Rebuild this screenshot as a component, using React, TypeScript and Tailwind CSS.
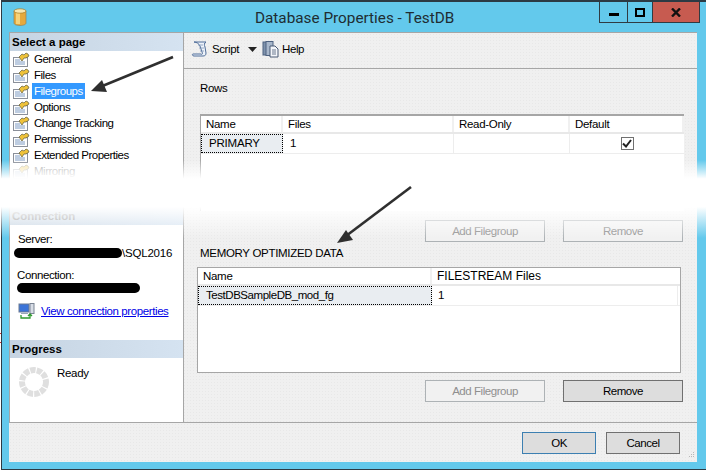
import React from "react";

const font = { fontFamily: '"Liberation Sans", Arial, sans-serif' };

function PageIcon({ dim }: { dim?: boolean }) {
  return (
    <svg width="17" height="15" viewBox="0 0 17 15" className={dim ? "shrink-0 opacity-40" : "shrink-0"}>
      <rect x="0.5" y="5.500" width="14" height="9" fill="#fdfdfd" stroke="#8a8f99" />
      <path d="M2 8h5M2 10h10M2 12h10" stroke="#7f9cc4" strokeWidth="1" />
      <path d="M6 5l3-3 2 1 2-2 2 1 1 2-3 2-2 0-2 3z" fill="#efc23a" stroke="#5f5a3a" strokeWidth="0.7" />
    </svg>
  );
}

function NavItem({ label, active, dim }: { label: string; active?: boolean; dim?: boolean }) {
  return (
    <div className="flex h-4 items-center pl-[3px]">
      <PageIcon dim={dim} />
      <span
        className={
          "ml-[2px] flex h-4 items-center px-[2px] pt-[1px] text-[11.5px] tracking-[-0.5px] " +
          (active ? "bg-[#3399ff] text-white" : dim ? "text-[#a8a8a8]" : "text-black")
        }
      >
        {label}
      </span>
    </div>
  );
}

function SectionHead({ label, faded }: { label: string; faded?: boolean }) {
  return (
    <div
      className={
        "flex h-[18px] items-center bg-gradient-to-r from-[#c6d4e2] to-[#d5e3f1] pl-[2px] pt-[1px] text-[11.5px] font-bold " +
        (faded ? "text-[#888]" : "text-black")
      }
    >
      {label}
    </div>
  );
}

function Btn({ label, disabled, primary, w }: { label: string; disabled?: boolean; primary?: boolean; w: string }) {
  return (
    <div
      className={
        "flex h-[22px] items-center justify-center border pt-[1px] text-[11.5px] tracking-[-0.45px] " +
        w +
        " " +
        (disabled
          ? "border-[#adb2b5] bg-[#f1f1f1] text-[#8f8f8f]"
          : primary
            ? "border-[#3c7fb1] bg-[#dddddd] text-black"
            : "border-[#707070] bg-[#dddddd] text-black")
      }
    >
      {label}
    </div>
  );
}

function HeadCell({ label, w }: { label: string; w: string }) {
  return (
    <div className={"flex h-full items-center border-r-2 border-[#f0f0f0] pl-[5px] pt-[1px] text-[11.5px] tracking-[-0.3px] text-black " + w}>{label}</div>
  );
}

export default function App() {
  return (
    <div className="relative h-[471px] w-[706px] overflow-hidden bg-white pl-[1px] text-[11.5px] text-black" style={font}>
      <div className="flex h-[470px] flex-col border-b border-l border-t-2 border-b-[#2c3a44] border-l-[#2c3a44] border-t-[#2c3a44] bg-[#63c9ec]">
        {/* title bar */}
        <div className="relative flex h-[30px] shrink-0 items-start">
          <svg width="14" height="18" viewBox="0 0 14 18" className="ml-[11px] mt-[6px]">
            <path d="M1 3v12c0 1.500 2.500 2.500 6 2.500s6-1 6-2.500V3z" fill="#e5a93c" stroke="#9a8050" strokeWidth="0.7" />
            <rect x="3" y="4" width="4" height="12" fill="#f6d27a" />
            <ellipse cx="7" cy="3" rx="6" ry="2.200" fill="#f8e7b0" stroke="#a87a1f" strokeWidth="0.7" />
          </svg>
          <div className="ml-[228px] mt-[5px] text-[15.3px] leading-[22px] text-[#1f2d33]" style={{ fontFamily: "Roboto, sans-serif" }}>
            Database Properties - TestDB
          </div>
          <div className="ml-auto mr-[6px] flex h-[21px] border border-t-0 border-[#303b42]">
            <div className="flex w-[28px] items-center justify-center border-r border-[#303b42]">
              <div className="mt-[4px] h-[3px] w-[10px] bg-black" />
            </div>
            <div className="flex w-[25px] items-center justify-center border-r border-[#303b42]">
              <div className="h-[9px] w-[10px] border-2 border-black" />
            </div>
            <div className="flex w-[46px] items-center justify-center bg-[#c75b50]">
              <svg width="10" height="9" viewBox="0 0 10 9">
                <path d="M1 .5l8 8M9 .5l-8 8" stroke="#111" strokeWidth="2.4" />
              </svg>
            </div>
          </div>
        </div>

        {/* dialog */}
        <div className="ml-[7px] flex h-[430px] w-[688px] shrink-0 flex-col border-t border-t-[#a6a6a6] bg-[#f0f0f0] bg-[radial-gradient(#e8e8e8_0.6px,transparent_0.7px)] bg-[length:3px_3px]">
          <div className="flex h-[390px] shrink-0 border-b border-[#a6a6a6]">
            {/* sidebar */}
            <div className="flex w-[175px] shrink-0 flex-col border-x border-[#a6a6a6] bg-white">
              <div className="h-[174px] shrink-0">
                <SectionHead label="Select a page" />
                <div className="flex flex-col">
                  <NavItem label="General" />
                  <NavItem label="Files" />
                  <NavItem label="Filegroups" active />
                  <NavItem label="Options" />
                  <NavItem label="Change Tracking" />
                  <NavItem label="Permissions" />
                  <NavItem label="Extended Properties" />
                  <NavItem label="Mirroring" dim />
                </div>
              </div>
              <div className="h-[133px] shrink-0">
                <SectionHead label="Connection" faded />
                <div className="pl-[4px] pt-[7px] leading-[14px] tracking-[-0.4px]">
                  <div className="pl-[4px]">Server:</div>
                  <div className="flex items-center">
                    <span className="h-[10px] w-[108px] rounded-full bg-black" />
                    <span className="tracking-[-0.2px]">\SQL2016</span>
                  </div>
                  <div className="ml-[3px] mt-[8px]">Connection:</div>
                  <div className="ml-[3px] mt-[1px] h-[10px] w-[123px] rounded-full bg-black" />
                  <div className="ml-[4px] mt-[10px] flex items-center">
                    <svg width="17" height="16" viewBox="0 0 17 16">
                      <rect x="1" y="1" width="10" height="8" fill="#3b74d8" stroke="#6a7a94" />
                      <rect x="12" y="0.5" width="4" height="10" fill="#d8dde6" stroke="#7a8493" />
                      <path d="M3 10h7v1H3z" fill="#9aa7b8" />
                      <path d="M3 12v3h9v-3M10 13l2-2 2 2" fill="none" stroke="#2f9a2f" strokeWidth="1.3" />
                    </svg>
                    <span className="ml-[6px] whitespace-nowrap text-[#0000e6] underline">View connection properties</span>
                  </div>
                </div>
              </div>
              <div className="flex-1">
                <SectionHead label="Progress" />
                <div className="flex pl-[9px] pt-[9px]">
                  <svg width="30" height="30" viewBox="0 0 30 30">
                    <circle cx="15" cy="15" r="12" fill="none" stroke="#dfdfdf" strokeWidth="6" strokeDasharray="5.400 1.150" />
                  </svg>
                  <span className="ml-[8px] mt-[-2px] tracking-[-0.3px]">Ready</span>
                </div>
              </div>
            </div>

            {/* main */}
            <div className="flex min-w-0 flex-1 flex-col">
              <div className="flex h-[36px] shrink-0 items-center border-b border-[#a6a6a6] pb-[2px] pl-[7px]">
                <svg width="17" height="17" viewBox="0 0 17 17">
                  <path d="M3 1h12c-2 1-2 3-1 5l1 6c0 2-1 3-3 3H3c-2 0-2-2-1-2h8c1 1 2 0 1-2L9 5C8 3 6 1 3 1z" fill="#eef3fa" stroke="#4f6d99" strokeWidth="1" />
                  <path d="M7 4h5M8 7h5M9 10h4" stroke="#7f96b6" strokeWidth="0.8" />
                </svg>
                <span className="ml-[4px] w-[25px] tracking-[-0.4px]">Script</span>
                <svg width="9" height="5" viewBox="0 0 9 5" className="ml-[11px]">
                  <path d="M0 0h9L4.500 5z" fill="#222" />
                </svg>
                <svg width="17" height="17" viewBox="0 0 17 17" className="ml-[5px]">
                  <rect x="1" y="1" width="7" height="13" fill="#7f93ad" stroke="#4e6280" />
                  <rect x="4" y="0.500" width="7" height="14" fill="#a8b7cb" stroke="#4e6280" />
                  <path d="M8 5h5l3 3v8H8z" fill="#f4f6fa" stroke="#4a5a75" />
                  <path d="M10 9h4M10 11h4M10 13h4" stroke="#4a5a75" strokeWidth="0.8" />
                </svg>
                <span className="ml-[3px] tracking-[-0.4px]">Help</span>
              </div>

              <div className="pl-[16px] pt-[12px] leading-[15px] tracking-[-0.3px]">Rows</div>

              {/* table 1 */}
              <div className="ml-[16px] mt-[18px] h-[97px] w-[484px] border-l border-t-2 border-[#a6a6a6] bg-white">
                <div className="flex h-[18px] border-b-2 border-[#e8e8e8]">
                  <HeadCell label="Name" w="w-[82px]" />
                  <HeadCell label="Files" w="w-[171px]" />
                  <HeadCell label="Read-Only" w="w-[116px]" />
                  <HeadCell label="Default" w="w-[114px]" />
                </div>
                <div className="flex h-[20px] border-b border-[#ededed]">
                  <div className="flex w-[82px] items-center border border-dotted border-black bg-[#e9edf1] pl-[7px] tracking-[-0.2px]">PRIMARY</div>
                  <div className="flex w-[171px] items-center border-r border-[#ededed] pl-[7px]">1</div>
                  <div className="w-[116px] border-r border-[#ededed]" />
                  <div className="flex w-[114px] items-center justify-center">
                    <div className="flex h-[13px] w-[13px] items-center justify-center border border-[#707070] bg-white">
                      <svg width="10" height="9" viewBox="0 0 10 9">
                        <path d="M1 4.500l3 3 5-6.500" fill="none" stroke="#222" strokeWidth="2" />
                      </svg>
                    </div>
                  </div>
                </div>
              </div>

              <div className="mr-[14px] mt-[9px] flex justify-end gap-[18px]">
                <Btn label="Add Filegroup" disabled w="w-[120px]" />
                <Btn label="Remove" disabled w="w-[120px]" />
              </div>

              <div className="ml-[16px] mt-[4px] leading-[15px] tracking-[-0.3px]">MEMORY OPTIMIZED DATA</div>

              {/* table 2 */}
              <div className="ml-[13px] mt-[6px] h-[106px] w-[484px] border border-[#a6a6a6] bg-white">
                <div className="flex h-[18px] border-b-2 border-[#e8e8e8]">
                  <HeadCell label="Name" w="w-[234px]" />
                  <div className="flex items-center pl-[5px] text-[12px]">FILESTREAM Files</div>
                </div>
                <div className="flex h-[20px] border-b border-[#ededed]">
                  <div className="flex w-[234px] items-center border border-dotted border-black bg-[#e9edf1] pl-[7px] tracking-[-0.45px]">TestDBSampleDB_mod_fg</div>
                  <div className="flex w-[246px] items-center border-r border-[#ededed] pl-[6px]">1</div>
                </div>
              </div>

              <div className="mr-[14px] mt-[7px] flex justify-end gap-[18px]">
                <Btn label="Add Filegroup" disabled w="w-[120px]" />
                <Btn label="Remove" w="w-[120px]" />
              </div>
            </div>
          </div>

          {/* footer */}
          <div className="relative flex flex-1 items-start justify-end gap-[10px] pr-[17px] pt-[9px]">
            <Btn label="OK" primary w="w-[74px]" />
            <Btn label="Cancel" w="w-[74px]" />
            <svg width="8" height="8" viewBox="0 0 8 8" className="absolute bottom-[3px] right-[2px]">
              <path d="M6 1h1v1H6zM4 3h1v1H4zM6 3h1v1H6zM2 5h1v1H2zM4 5h1v1H4zM6 5h1v1H6z" fill="#b8b8b8" />
            </svg>
          </div>
        </div>
      </div>

      {/* torn-out white band over the screenshot */}
      <div className="pointer-events-none absolute left-0 top-[160px] h-[78px] w-full bg-[linear-gradient(to_bottom,rgba(255,255,255,0)_0%,rgba(255,255,255,1)_24%,rgba(255,255,255,1)_60%,rgba(255,255,255,0)_100%)]" />

      {/* arrows and the few stray pixels at the screenshot's edge */}
      <svg width="706" height="471" viewBox="0 0 706 471" className="pointer-events-none absolute left-0 top-0">
        <path d="M173 57L100 87" stroke="#2f2f2f" strokeWidth="2.600" fill="none" />
        <path d="M91 91l11-11 5 12z" fill="#2f2f2f" />
        <path d="M411 187L346 236" stroke="#2f2f2f" strokeWidth="2.600" fill="none" />
        <path d="M337 243l9-13 7 10z" fill="#2f2f2f" />
        <path d="M0 317h1v1H0zM0 333h1v1H0zM0 342h1v1H0z" fill="#d83030" />
      </svg>
    </div>
  );
}
